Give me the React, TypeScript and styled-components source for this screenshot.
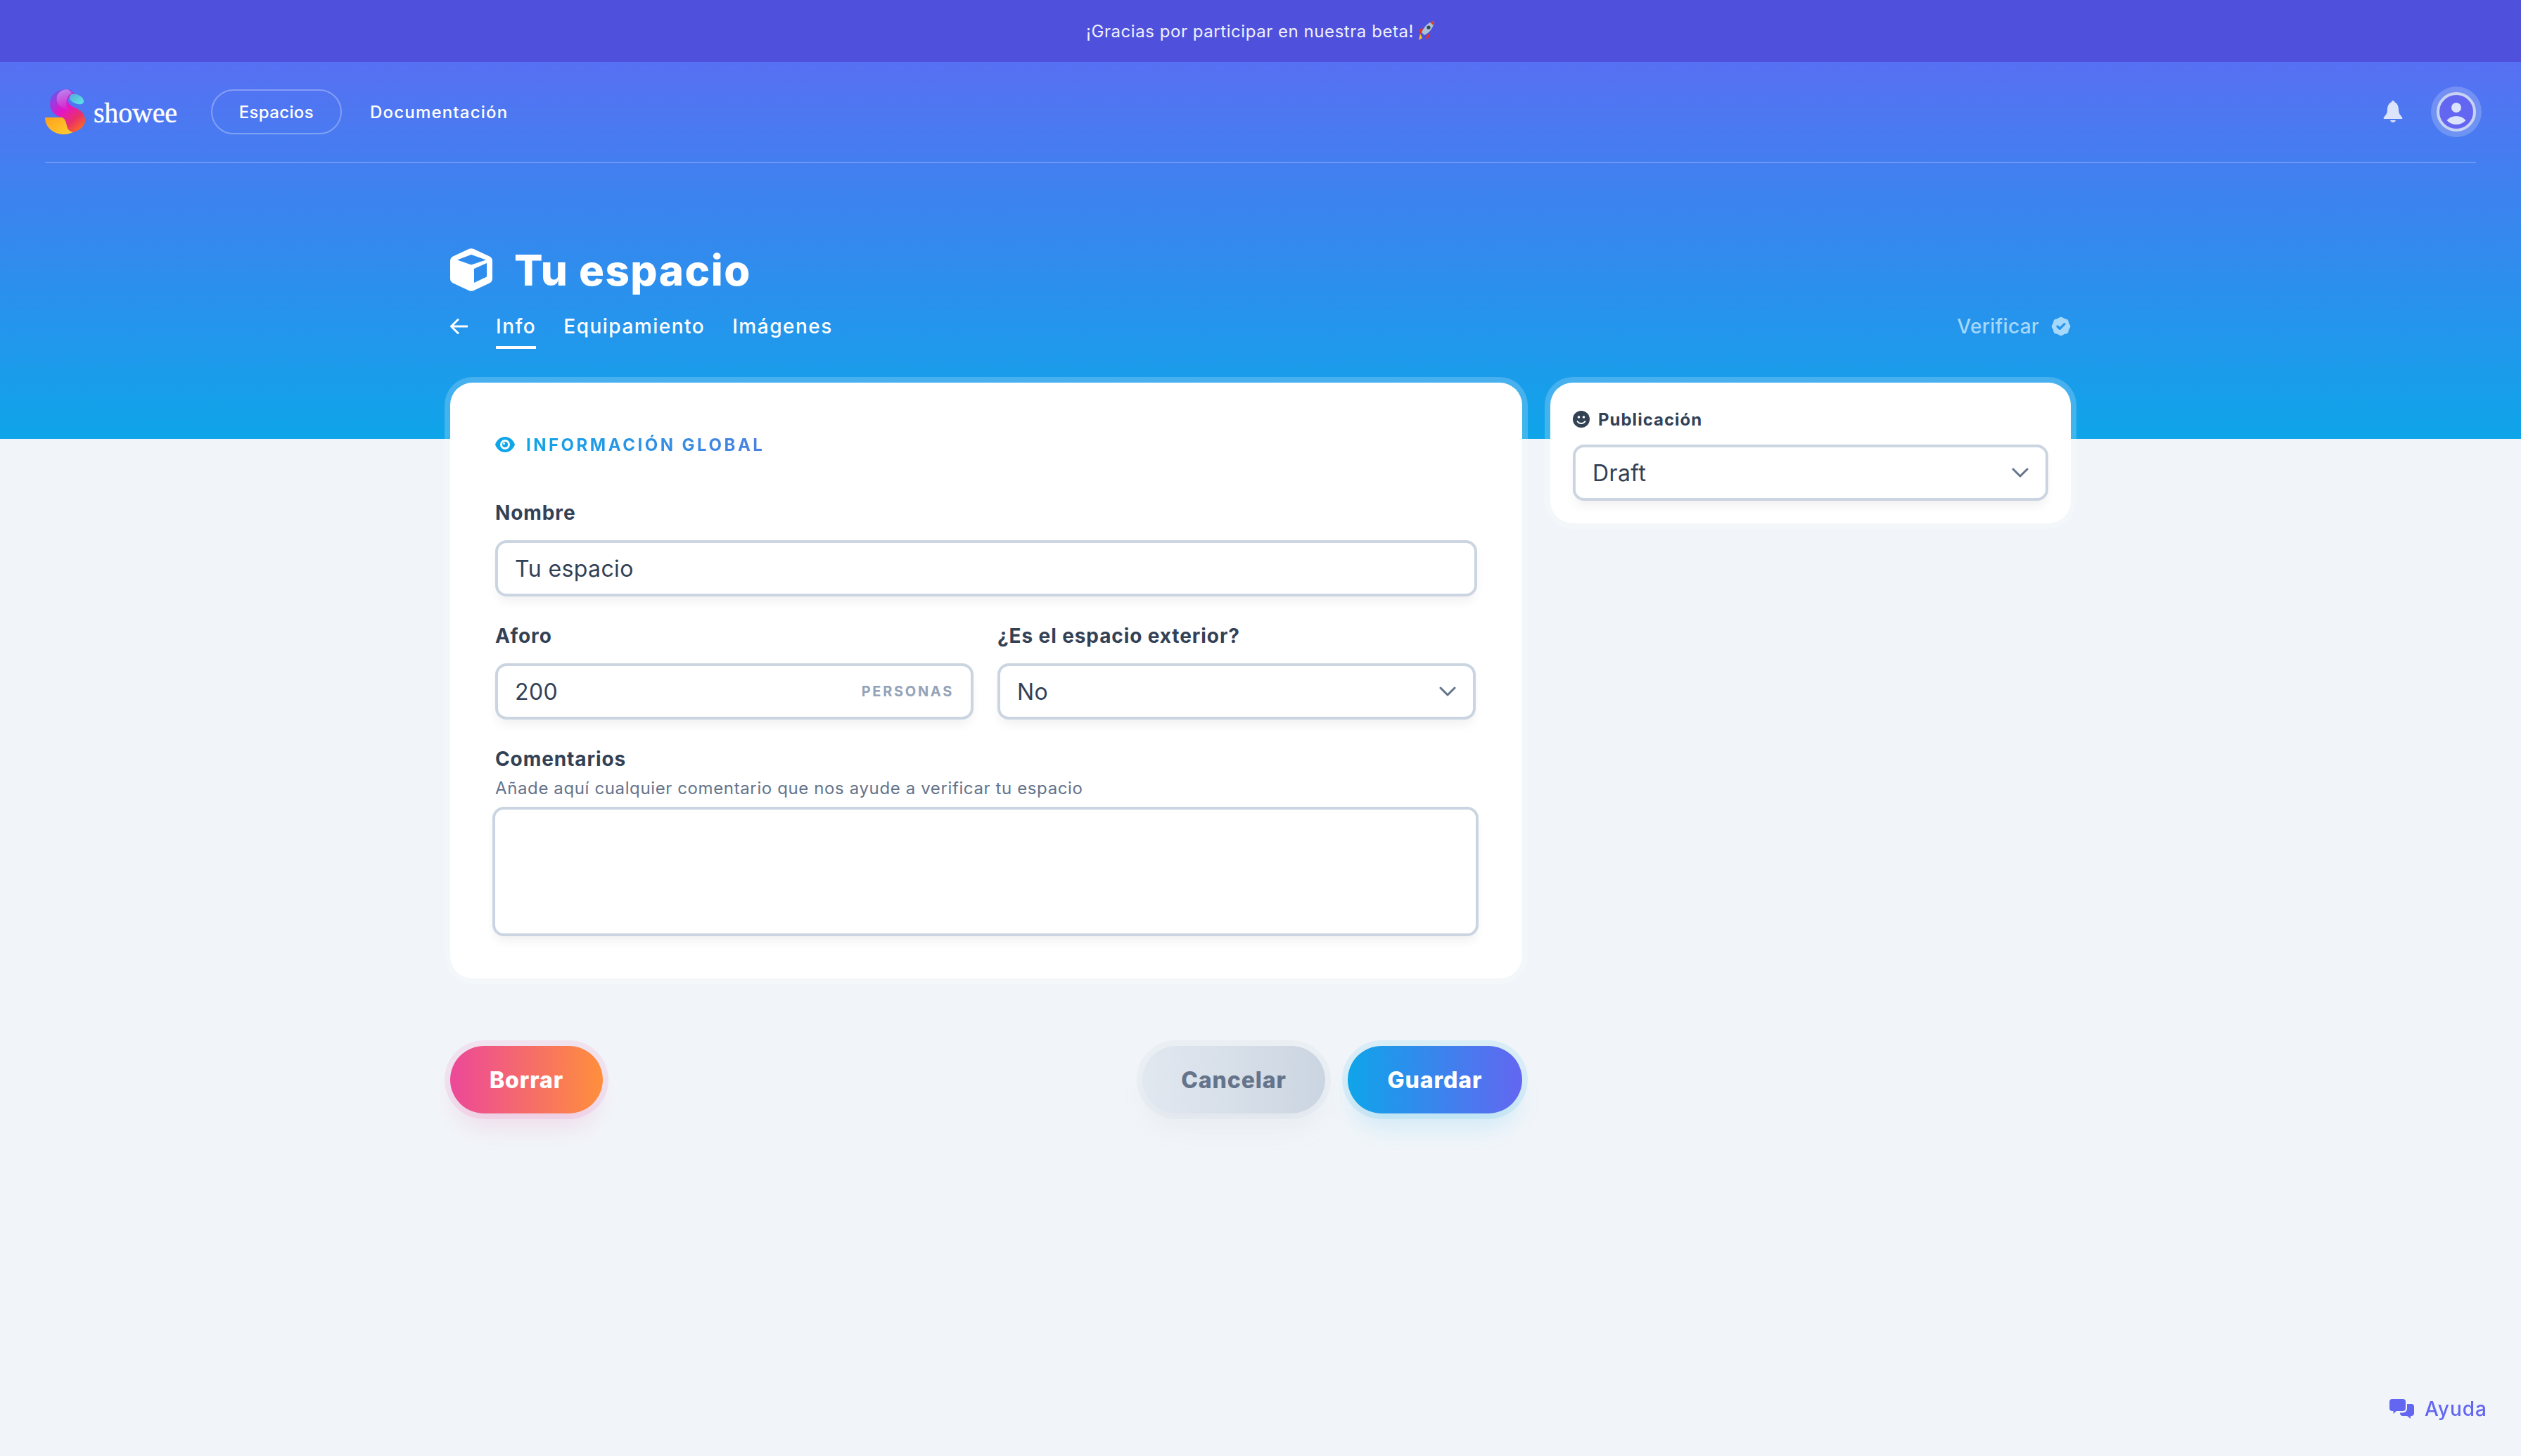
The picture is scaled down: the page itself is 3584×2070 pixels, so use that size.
import styled, { createGlobalStyle } from "styled-components";

const GlobalStyle = createGlobalStyle`
  * {
    box-sizing: border-box;
  }
  html,
  body {
    margin: 0;
    padding: 0;
    background: #f1f5f9;
    font-family: Inter, "Liberation Sans", sans-serif;
    color: #334155;
  }
`;

const Page = styled.div`
  min-height: 100vh;
  position: relative;
`;

const Banner = styled.div`
  display: flex;
  align-items: center;
  justify-content: center;
  gap: 6px;
  height: 88px;
  background: #4f50dc;
  color: #eef0fd;
  font-size: 24px;
  letter-spacing: 0.55px;
`;

const Hero = styled.div`
  height: 536px;
  background: linear-gradient(180deg, #5770f3 0%, #0ea5e9 100%);
  padding: 0 64px;
`;

const NavRow = styled.nav`
  display: flex;
  align-items: center;
  height: 144px;
  border-bottom: 2px solid rgba(255, 255, 255, 0.2);
`;

const LogoLink = styled.div`
  display: flex;
  align-items: center;
  gap: 12px;
  margin-right: 48px;
`;

const LogoText = styled.span`
  margin-top: 3px;
  color: #fff;
  font-family: "Liberation Serif", serif;
  font-size: 40px;
  line-height: 1;
  letter-spacing: -0.2px;
  -webkit-text-stroke: 0.4px #fff;
`;

const NavLink = styled.a<{ $active?: boolean; $spacing: number }>`
  display: flex;
  align-items: center;
  height: 64px;
  padding: 0 38px;
  border: 2px solid ${(p) => (p.$active ? "rgba(255,255,255,0.3)" : "transparent")};
  border-radius: 32px;
  color: #fff;
  font-size: 24px;
  font-weight: 500;
  letter-spacing: ${(p) => p.$spacing}px;
`;

const NavRight = styled.div`
  display: flex;
  align-items: center;
  gap: 48px;
  margin-left: auto;
`;

const Avatar = styled.div`
  display: flex;
  align-items: center;
  justify-content: center;
  width: 56px;
  height: 56px;
  border: 4px solid #c9d4f2;
  border-radius: 50%;
  background: #6366f1;
  box-shadow: 0 0 0 8px rgba(255, 255, 255, 0.2);
`;

const Container = styled.div`
  width: 2304px;
  margin: 0 auto;
`;

const HeroTitle = styled.div`
  display: flex;
  align-items: center;
  gap: 31px;
  height: 61px;
  margin-top: 121px;
`;

const Title = styled.h1`
  margin: 0;
  color: #fff;
  font-size: 60px;
  font-weight: 800;
  letter-spacing: 1.5px;
`;

const TabsRow = styled.div`
  display: flex;
  align-items: flex-start;
  margin-top: 29px;
`;

const BackButton = styled.div`
  display: flex;
  align-items: center;
  height: 42px;
  width: 65px;
`;

const Tab = styled.a<{ $active?: boolean }>`
  height: 53px;
  margin-right: 39px;
  border-bottom: 4px solid ${(p) => (p.$active ? "#fff" : "transparent")};
  color: #fff;
  font-size: 28px;
  font-weight: 500;
  line-height: 42px;
  letter-spacing: 1.5px;
`;

const Verify = styled.div`
  display: flex;
  align-items: center;
  gap: 17px;
  height: 42px;
  margin-left: auto;
  color: #a6d8fb;
  font-size: 28px;
  font-weight: 500;
  letter-spacing: 0.3px;
`;

const MainGrid = styled(Container)`
  display: grid;
  grid-template-columns: 1524px 740px;
  gap: 40px;
  align-items: start;
  margin-top: -80px;
`;

const Card = styled.section<{ $pad: string }>`
  padding: ${(p) => p.$pad};
  background: #fff;
  border-radius: 32px;
  box-shadow: 0 0 0 8px rgba(255, 255, 255, 0.2);
`;

const SectionTitle = styled.div`
  display: flex;
  align-items: center;
  gap: 16px;
  height: 48px;
  margin-bottom: 53px;
`;

const SectionText = styled.span`
  background: linear-gradient(90deg, #0ea5e9, #4b7fe0);
  background-clip: text;
  -webkit-background-clip: text;
  color: transparent;
  font-size: 24px;
  font-weight: 700;
  letter-spacing: 3.5px;
  text-transform: uppercase;
`;

const Field = styled.div`
  display: flex;
  flex-direction: column;
  margin-bottom: 36px;
`;

const Label = styled.label`
  display: block;
  height: 40px;
  margin-bottom: 19px;
  color: #334155;
  font-size: 28px;
  font-weight: 700;
  line-height: 40px;
  letter-spacing: 0.9px;
`;

const TwoCols = styled.div`
  display: grid;
  grid-template-columns: 680px 680px;
  gap: 34px;
`;

const controlStyles = `
  height: 80px;
  background: #fff;
  border: 4px solid #cbd5e1;
  border-radius: 16px;
  box-shadow: 0 10px 15px -3px rgba(15, 23, 42, 0.06);
  color: #334155;
  font-family: inherit;
  font-size: 32px;
  letter-spacing: 0.4px;
`;

const Input = styled.input`
  ${controlStyles}
  width: 100%;
  padding: 0 24px;
  outline: none;
`;

const InputBox = styled.div`
  ${controlStyles}
  display: flex;
  align-items: center;
  justify-content: space-between;
  padding: 0 24px;
`;

const Unit = styled.span`
  color: #94a3b8;
  font-size: 20px;
  font-weight: 700;
  letter-spacing: 2.7px;
`;

const Helper = styled.div`
  height: 36px;
  margin: -15px 0 8px;
  color: #64748b;
  font-size: 24px;
  line-height: 36px;
  letter-spacing: 0.62px;
`;

const TextArea = styled.textarea`
  ${controlStyles}
  display: block;
  width: 1402px;
  height: 184px;
  margin: 0 -4px;
  padding: 16px 24px;
  outline: none;
  resize: none;
`;

const Actions = styled.div`
  display: flex;
  align-items: center;
  gap: 32px;
  margin-top: 96px;
`;

const ActionButton = styled.button<{ $from: string; $to: string; $glow: string; $width: number; $color: string }>`
  width: ${(p) => p.$width}px;
  height: 96px;
  border: 0;
  border-radius: 48px;
  background: linear-gradient(90deg, ${(p) => p.$from}, ${(p) => p.$to});
  box-shadow:
    0 0 0 8px ${(p) => p.$glow}1a,
    0 26px 36px -8px ${(p) => p.$glow}26;
  color: ${(p) => p.$color};
  font-family: inherit;
  font-size: 32px;
  font-weight: 800;
  letter-spacing: 0.9px;

  &:first-child {
    margin-right: auto;
  }
`;

const SideHeading = styled.div`
  display: flex;
  align-items: center;
  gap: 12px;
  height: 36px;
  margin-bottom: 18px;
  color: #334155;
  font-size: 24px;
  font-weight: 700;
  letter-spacing: 1px;
`;

const HelpLink = styled.a`
  position: fixed;
  right: 48px;
  bottom: 50px;
  display: flex;
  align-items: center;
  gap: 15px;
  color: #6366f1;
  font-size: 28px;
  font-weight: 500;
  letter-spacing: 1px;
`;

function Logo() {
  return (
    <svg width="57" height="64" viewBox="0 0 57 64">
      <defs>
        <linearGradient id="logoMain" x1="0.1" y1="0" x2="0.8" y2="1">
          <stop offset="0" stopColor="#5c5cf0" />
          <stop offset="0.45" stopColor="#e414c8" />
          <stop offset="0.75" stopColor="#e8306a" />
          <stop offset="1" stopColor="#ff6a20" />
        </linearGradient>
        <linearGradient id="logoBand" x1="0.4" y1="0" x2="0.6" y2="1">
          <stop offset="0" stopColor="#b884ee" />
          <stop offset="1" stopColor="#e018c8" />
        </linearGradient>
        <linearGradient id="logoTip" x1="0" y1="0" x2="1" y2="1">
          <stop offset="0" stopColor="#58a8d8" />
          <stop offset="1" stopColor="#5ce8e8" />
        </linearGradient>
        <linearGradient id="logoFoot" x1="0" y1="0" x2="1" y2="1">
          <stop offset="0" stopColor="#ffa01a" />
          <stop offset="1" stopColor="#ffd030" />
        </linearGradient>
      </defs>
      <path
        d="M30 0C15 0 7 9 7 20C7 31 14 37 24 40C28 42 30 47 31 52C32 57 35 60 40 61C50 58 57 52 57 44C57 33 48 28 40 25C34 22 32 18 33 14C34 9 38 7 42 7C40 3 36 0 30 0Z"
        fill="url(#logoMain)"
      />
      <path
        d="M30 0C20 1 15 9 17 17C19 25 27 27 35 31C28 24 29 10 38 5C36 2 33 0 30 0Z"
        fill="url(#logoBand)"
      />
      <path
        d="M37 7C44 5 55 10 55 17C55 21 50 22 47 21C41 20 35 16 35 12C35 10 36 8 37 7Z"
        fill="url(#logoTip)"
      />
      <path
        d="M0 40H24C28 41 30 46 31 52C32 57 35 60 40 61C35 63 31 64 27 64C12 64 0 54 0 40Z"
        fill="url(#logoFoot)"
      />
    </svg>
  );
}

function Rocket() {
  return (
    <svg width="24" height="30" viewBox="0 0 24 30">
      <path d="M3 19L1 28L6 25Z" fill="#ffc21a" />
      <path d="M6 10L1 14L3 19L7 16Z" fill="#e8341c" />
      <path d="M13 21L11 27L16 24L17 18Z" fill="#e8341c" />
      <path d="M23 1C16 2 9 8 5 17L9 21C17 17 22 10 23 1Z" fill="#a9c4d6" />
      <circle cx="15" cy="10" r="2.6" fill="#3b4654" />
      <path d="M23 1C21 1.300 19 2 17.500 3L21 6.500C22 5 22.800 3 23 1Z" fill="#e8341c" />
    </svg>
  );
}

function BellIcon() {
  return (
    <svg width="28" height="32" viewBox="0 0 28 32" fill="#dce4fb">
      <circle cx="14" cy="2" r="2" />
      <path d="M14 1.500C8 2.500 6 8 6 13C6 19 3 21 .8 24Q0 26 2 26H26Q28 26 27.200 24C25 21 22 19 22 13C22 8 20 2.500 14 1.500Z" />
      <path d="M10 28H18C17 32 11 32 10 28Z" />
    </svg>
  );
}

function PersonIcon() {
  return (
    <svg width="48" height="48" viewBox="0 0 48 48" fill="#dce4fb">
      <circle cx="24" cy="18" r="7" />
      <path d="M10.500 36C14 32 19 30 24 30C29 30 34 32 37.500 36C34 40 29 42 24 42C19 42 14 40 10.500 36Z" />
    </svg>
  );
}

function CubeIcon() {
  return (
    <svg width="60" height="61" viewBox="0 0 60 61">
      <path
        fillRule="evenodd"
        fill="#fff"
        d="M27 .8Q30 -.4 33 .8L56 11.500Q60 13.500 60 18V43Q60 47.500 56 49.500L33 60.200Q30 61.400 27 60.200L4 49.500Q0 47.500 0 43V18Q0 13.500 4 11.500ZM30 9L10 16.500L30 23.500L51 16.500ZM34 29V49L52 40.500V21Z"
      />
    </svg>
  );
}

function BackArrow() {
  return (
    <svg width="25" height="22" viewBox="0 0 25 22" fill="none" stroke="#fff" strokeWidth="3" strokeLinecap="round" strokeLinejoin="round">
      <path d="M24 11H2M11 1.500L1.500 11L11 20.500" />
    </svg>
  );
}

function BadgeCheck() {
  return (
    <svg width="28" height="28" viewBox="1.500 1.500 17 17" fill="#a6d8fb">
      <path
        fillRule="evenodd"
        d="M6.267 3.455a3.066 3.066 0 001.745-.723 3.066 3.066 0 013.976 0 3.066 3.066 0 001.745.723 3.066 3.066 0 012.812 2.812c.051.643.304 1.254.723 1.745a3.066 3.066 0 010 3.976 3.066 3.066 0 00-.723 1.745 3.066 3.066 0 01-2.812 2.812 3.066 3.066 0 00-1.745.723 3.066 3.066 0 01-3.976 0 3.066 3.066 0 00-1.745-.723 3.066 3.066 0 01-2.812-2.812 3.066 3.066 0 00-.723-1.745 3.066 3.066 0 010-3.976 3.066 3.066 0 00.723-1.745 3.066 3.066 0 012.812-2.812zm7.44 5.252a1 1 0 00-1.414-1.414L9 10.586 7.707 9.293a1 1 0 00-1.414 1.414l2 2a1 1 0 001.414 0l4-4z"
      />
    </svg>
  );
}

function EyeIcon() {
  return (
    <svg width="28" height="22" viewBox="0 0 28 22">
      <path
        fillRule="evenodd"
        fill="#0ea5e9"
        d="M14 0C21 0 26 5 28 11C26 17 21 22 14 22C7 22 2 17 0 11C2 5 7 0 14 0ZM14 4A7 7 0 1 0 14 18A7 7 0 1 0 14 4Z"
      />
      <circle cx="14" cy="11" r="4" fill="#0ea5e9" />
      <circle cx="12.500" cy="9.500" r="1.500" fill="#fff" />
    </svg>
  );
}

function SmileIcon() {
  return (
    <svg width="24" height="24" viewBox="0 0 24 24">
      <circle cx="12" cy="12" r="12" fill="#334155" />
      <circle cx="8.500" cy="9" r="1.800" fill="#fff" />
      <circle cx="15.500" cy="9" r="1.800" fill="#fff" />
      <path d="M6.500 15C9 19 15 19 17.500 15" fill="none" stroke="#fff" strokeWidth="1.800" strokeLinecap="round" />
    </svg>
  );
}

function Chevron() {
  return (
    <svg width="24" height="14" viewBox="0 0 24 14" fill="none" stroke="#64748b" strokeWidth="3" strokeLinecap="round" strokeLinejoin="round">
      <path d="M2 2L12 12L22 2" />
    </svg>
  );
}

function ChatIcon() {
  return (
    <svg width="35" height="28" viewBox="0 0 35 28" fill="#6366f1">
      <path d="M4 0H19a4 4 0 0 1 4 4V13a4 4 0 0 1-4 4H10L5.500 21V17H4a4 4 0 0 1-4-4V4a4 4 0 0 1 4-4Z" />
      <path d="M25 7H31a4 4 0 0 1 4 4V20a4 4 0 0 1-4 4H30V28L25 24H19a4 4 0 0 1-4-4V19.500H19a6 6 0 0 0 6-6Z" />
    </svg>
  );
}

export default function App() {
  return (
    <Page>
      <GlobalStyle />
      <Banner>
        ¡Gracias por participar en nuestra beta! <Rocket />
      </Banner>
      <Hero>
        <NavRow>
          <LogoLink>
            <Logo />
            <LogoText>showee</LogoText>
          </LogoLink>
          <NavLink $active $spacing={0.35}>Espacios</NavLink>
          <NavLink $spacing={1.2}>Documentación</NavLink>
          <NavRight>
            <BellIcon />
            <Avatar>
              <PersonIcon />
            </Avatar>
          </NavRight>
        </NavRow>
        <Container>
          <HeroTitle>
            <CubeIcon />
            <Title>Tu espacio</Title>
          </HeroTitle>
          <TabsRow>
            <BackButton>
              <BackArrow />
            </BackButton>
            <Tab $active>Info</Tab>
            <Tab>Equipamiento</Tab>
            <Tab>Imágenes</Tab>
            <Verify>
              Verificar
              <BadgeCheck />
            </Verify>
          </TabsRow>
        </Container>
      </Hero>
      <MainGrid>
        <div>
          <Card $pad="64px 64px 60px">
            <SectionTitle>
              <EyeIcon />
              <SectionText>Información global</SectionText>
            </SectionTitle>
            <Field>
              <Label>Nombre</Label>
              <Input defaultValue="Tu espacio" />
            </Field>
            <TwoCols>
              <Field>
                <Label>Aforo</Label>
                <InputBox>
                  200
                  <Unit>PERSONAS</Unit>
                </InputBox>
              </Field>
              <Field>
                <Label>¿Es el espacio exterior?</Label>
                <InputBox>
                  No
                  <Chevron />
                </InputBox>
              </Field>
            </TwoCols>
            <Label>Comentarios</Label>
            <Helper>Añade aquí cualquier comentario que nos ayude a verificar tu espacio</Helper>
            <TextArea />
          </Card>
          <Actions>
            <ActionButton $from="#ec4899" $to="#ff8f3c" $glow="#ec4899" $width={217} $color="#fff">
              Borrar
            </ActionButton>
            <ActionButton $from="#e2e8f0" $to="#cbd5e1" $glow="#b0bccb" $width={260} $color="#64748b">
              Cancelar
            </ActionButton>
            <ActionButton $from="#0ea5e9" $to="#6366f1" $glow="#0ea5e9" $width={248} $color="#fff">
              Guardar
            </ActionButton>
          </Actions>
        </div>
        <Card $pad="34px 32px 32px">
          <SideHeading>
            <SmileIcon />
            Publicación
          </SideHeading>
          <InputBox>
            Draft
            <Chevron />
          </InputBox>
        </Card>
      </MainGrid>
      <HelpLink>
        <ChatIcon />
        Ayuda
      </HelpLink>
    </Page>
  );
}
